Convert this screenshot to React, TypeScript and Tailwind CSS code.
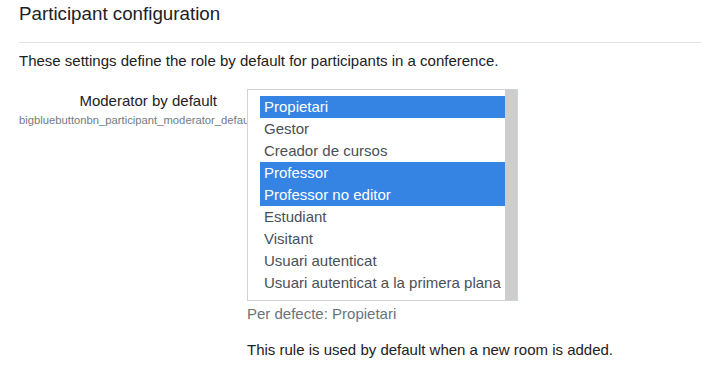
const roles = [
	{ name: "Propietari", selected: true },
	{ name: "Gestor", selected: false },
	{ name: "Creador de cursos", selected: false },
	{ name: "Professor", selected: true },
	{ name: "Professor no editor", selected: true },
	{ name: "Estudiant", selected: false },
	{ name: "Visitant", selected: false },
	{ name: "Usuari autenticat", selected: false },
	{ name: "Usuari autenticat a la primera plana", selected: false },
];

export default function App() {
	return (
		<div className="min-h-screen bg-white font-['Liberation_Sans',Arial,sans-serif] text-[#1d2125]">
			<div className="pl-[19px] pt-[2px]">
				<h3 className="text-[18.75px] leading-[24px] text-[#1d2125]">
					Participant configuration
				</h3>
				<hr className="mt-[16px] border-t border-[#e3e3e3]" />
				<p className="mt-[7px] text-[15px] leading-[22px]">
					These settings define the role by default for participants
					in a conference.
				</p>

				<div className="mt-[17px] flex flex-row">
					<div className="w-[228px] shrink-0 overflow-hidden pt-[1px]">
						<div className="pr-[30px] text-right text-[15px] leading-[22px]">
							Moderator by default
						</div>
						<div className="whitespace-nowrap text-[11.25px] leading-[16px] text-[#747b82]">
							bigbluebuttonbn_participant_moderator_default
						</div>
					</div>

					<div className="flex flex-col">
						<div className="flex h-[212px] w-[271px] flex-row border border-[#ced4da] bg-white">
							<div className="flex flex-1 flex-col pl-[12px] pt-[6px]">
								{roles.map((role) => (
									<div
										key={role.name}
										className={
											role.selected
												? "h-[22px] whitespace-nowrap bg-[#3584e4] px-[4px] text-[15px] leading-[22px] text-white"
												: "h-[22px] whitespace-nowrap px-[4px] text-[15px] leading-[22px] text-[#495057]"
										}
									>
										{role.name}
									</div>
								))}
							</div>
							<div className="w-[12px] bg-[#cdcdcd]"></div>
						</div>
						<div className="mt-[2px] text-[15px] leading-[22px] text-[#6a737b]">
							Per defecte: Propietari
						</div>
						<p className="mt-[14px] text-[15px] leading-[22px]">
							This rule is used by default when a new room is added.
						</p>
					</div>
				</div>
			</div>
		</div>
	);
}
